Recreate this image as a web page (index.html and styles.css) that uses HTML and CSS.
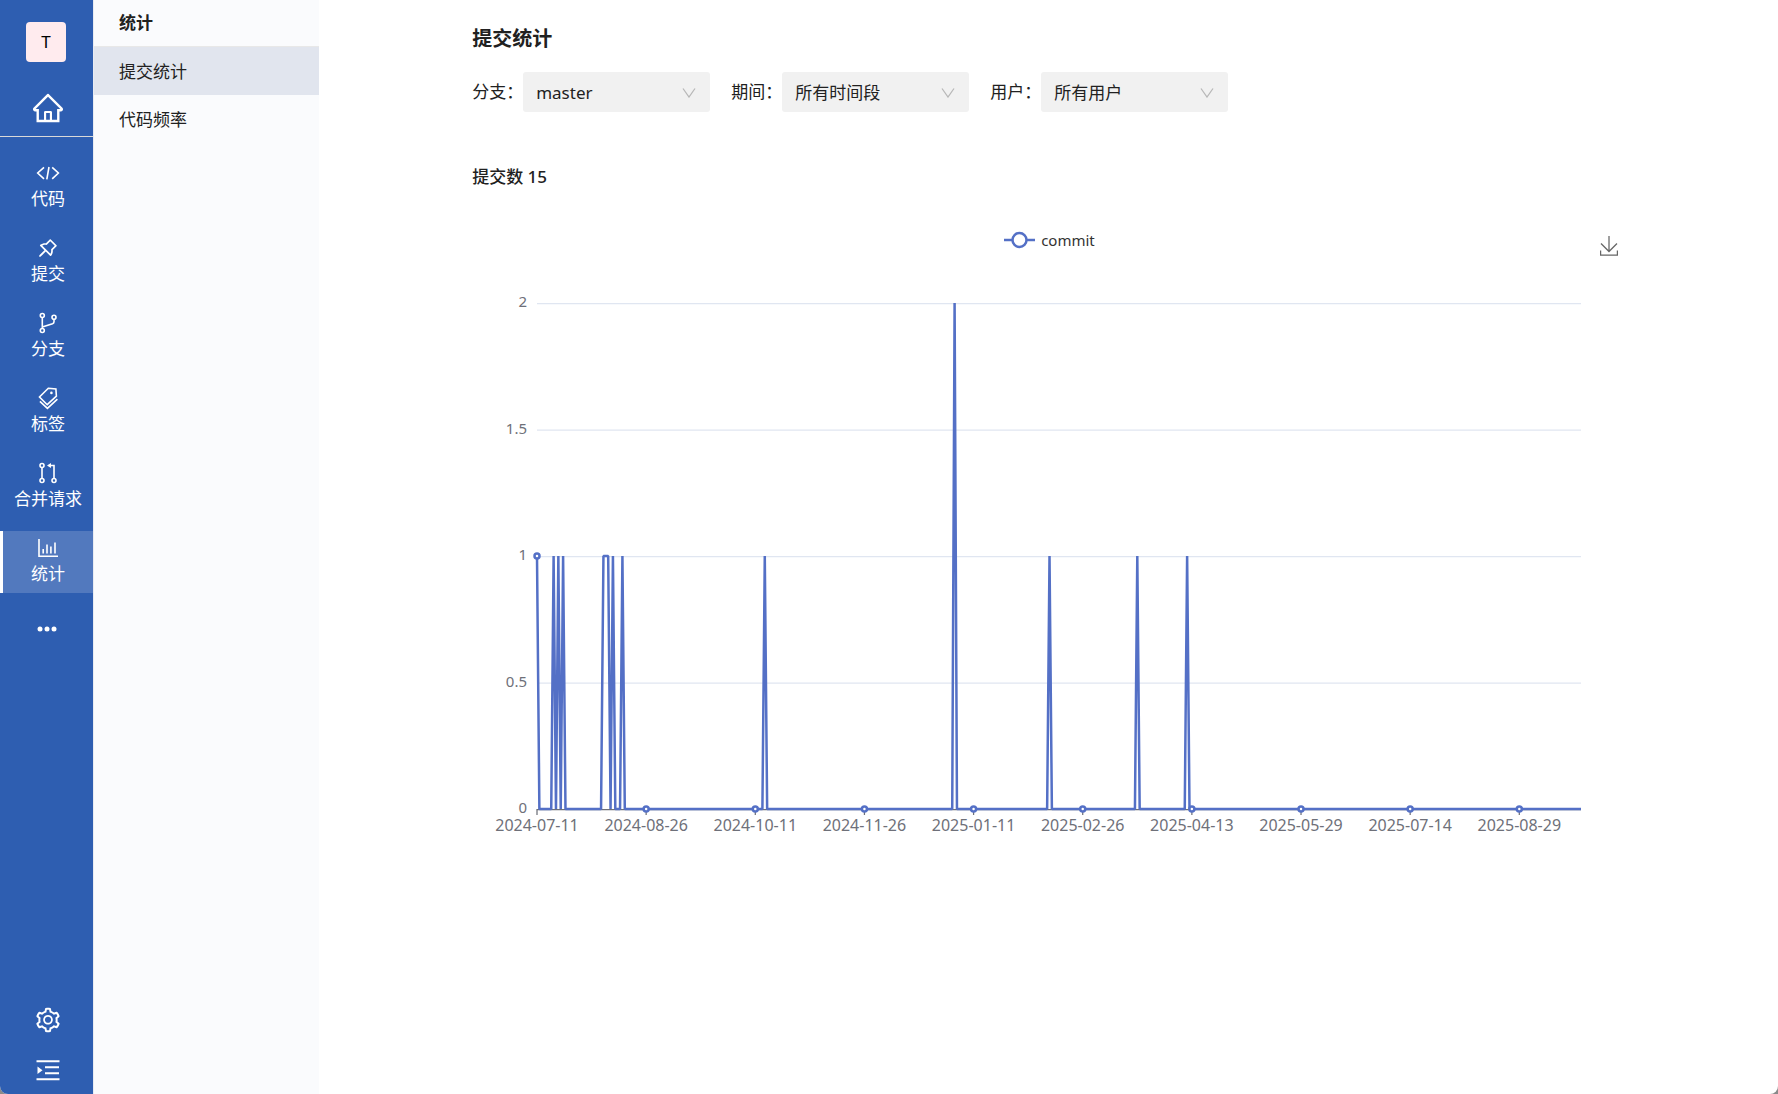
FILE: index.html
```html
<!DOCTYPE html>
<html lang="zh-CN">
<head>
  <meta charset="UTF-8" />
  <meta name="viewport" content="width=device-width, initial-scale=1.0" />
  <title>提交统计</title>
  <link rel="stylesheet" href="styles.css">
</head>
<body>

<div class="app">
  <aside class="sidebar">
    <a href="#" class="avatar">T</a>
    <a href="#" class="home" aria-label="首页">
      <svg viewBox="0 0 1024 1024" width="34" height="34" fill="currentColor"><path d="M946.5 505L560.1 118.8l-25.9-25.9a31.5 31.5 0 0 0-44.4 0L77.5 505a63.9 63.9 0 0 0-18.8 46c.4 35.2 29.7 63.3 64.9 63.3h42.5V940h691.8V614.3h43.4c17.1 0 33.2-6.7 45.3-18.8a63.6 63.6 0 0 0 18.7-45.3c0-17-6.7-33.1-18.8-45.2zM568 868H456V664h112v204zm217.9-325.7V868H632V640c0-22.1-17.9-40-40-40H432c-22.1 0-40 17.9-40 40v228H238.1V542.3h-96l370-369.7 23.1 23.1L882 542.3h-96.1z"/></svg>
    </a>

    <nav class="nav">
      <a href="#" class="nav-item">
        <svg class="icon" viewBox="0 0 24 24"><path d="M8 6.3 1.7 12 8 17.8M16.2 6.3l6.2 5.7-6.2 5.8M13 6l-2.2 12.3"/></svg>
        <span>代码</span>
      </a>
      <a href="#" class="nav-item">
        <svg class="icon icon-fill" viewBox="0 0 1024 1024"><path d="M878.3 392.1L631.9 145.7c-6.5-6.5-15-9.7-23.5-9.7s-17 3.2-23.5 9.7L423.8 306.9c-12.2-1.4-24.5-2-36.8-2-73.2 0-146.4 24.1-206.5 72.3-15.4 12.3-16.6 35.4-2.7 49.4l181.7 181.7-215.4 215.2a15.8 15.8 0 0 0-4.6 9.8l-3.4 37.2c-.9 9.4 6.6 17.4 15.9 17.4.5 0 1 0 1.5-.1l37.2-3.4c3.7-.3 7.2-2 9.8-4.6l215.4-215.4 181.7 181.7c6.5 6.5 15 9.7 23.5 9.7 9.7 0 19.3-4.2 25.9-12.4 56.3-70.3 79.7-158.3 70.2-243.4l161.1-161.1c12.9-12.8 12.9-33.8 0-46.8zM666.2 549.3l-24.5 24.5 3.8 34.4a259.92 259.92 0 0 1-30.4 153.9L262 408.8c12.9-7.1 26.3-13.1 40.3-17.9 27.2-9.4 55.7-14.1 84.7-14.1 9.6 0 19.3.5 28.9 1.6l34.4 3.8 24.5-24.5L608.5 224 800 415.5 666.2 549.3z"/></svg>
        <span>提交</span>
      </a>
      <a href="#" class="nav-item">
        <svg class="icon" viewBox="0 0 24 24"><circle cx="6.3" cy="4.5" r="2"/><circle cx="6.3" cy="19.5" r="2"/><circle cx="18" cy="6.3" r="2"/><path d="M6.3 6.5v11M18 8.3v2.5c0 1-.5 1.6-1.5 2L6.3 16"/></svg>
        <span>分支</span>
      </a>
      <a href="#" class="nav-item">
        <svg class="icon" viewBox="0 0 24 24"><path d="M12.3 2.3l7.6.6.5 7.3-9.2 8.5L3.5 11z"/><path d="M3.9 15.4l7.5 7 10-9.3"/><circle class="dot" cx="15.4" cy="6.9" r="1.3"/></svg>
        <span>标签</span>
      </a>
      <a href="#" class="nav-item">
        <svg class="icon" viewBox="0 0 24 24"><circle cx="6" cy="4.5" r="2"/><circle cx="6" cy="19.5" r="2"/><circle cx="18" cy="19.5" r="2"/><path d="M6 6.5v11M18 17.5v-13h-4.5"/><path class="dot" d="M11 4.5l4-2.6v5.2z"/></svg>
        <span>合并请求</span>
      </a>
      <a href="#" class="nav-item active" aria-current="page">
        <svg class="icon" viewBox="0 0 24 24"><path d="M3 3v17.2h19M7.2 17.4V13M11 17.4V8.5M14.9 17.4v-7M19 17.4V6.6"/></svg>
        <span>统计</span>
      </a>
    </nav>

    <button type="button" class="more" aria-label="更多">
      <svg viewBox="0 0 20 6" width="20" height="6" fill="currentColor"><circle cx="3" cy="3" r="2.5"/><circle cx="10" cy="3" r="2.5"/><circle cx="17" cy="3" r="2.5"/></svg>
    </button>

    <div class="sidebar-bottom">
      <button type="button" aria-label="设置">
        <svg viewBox="0 0 1024 1024" width="28" height="28" fill="currentColor"><path d="M924.8 625.7l-65.5-56c3.1-19 4.7-38.4 4.7-57.8s-1.6-38.8-4.7-57.8l65.5-56a32.03 32.03 0 0 0 9.3-35.2l-.9-2.6a443.74 443.74 0 0 0-79.7-137.9l-1.8-2.1a32.12 32.12 0 0 0-35.1-9.5l-81.3 28.9c-30-24.6-63.5-44-99.7-57.6l-15.7-85a32.05 32.05 0 0 0-25.8-25.7l-2.7-.5c-52.1-9.4-106.9-9.4-159 0l-2.7.5a32.05 32.05 0 0 0-25.8 25.7l-15.8 85.4a351.86 351.86 0 0 0-99 57.4l-81.9-29.1a32 32 0 0 0-35.1 9.5l-1.8 2.1a446.02 446.02 0 0 0-79.7 137.9l-.9 2.6c-4.5 12.5-.8 26.5 9.3 35.2l66.3 56.6c-3.1 18.8-4.6 38-4.6 57.1 0 19.2 1.5 38.4 4.6 57.1L99 625.5a32.03 32.03 0 0 0-9.3 35.2l.9 2.6c18.1 50.4 44.9 96.9 79.7 137.9l1.8 2.1a32.12 32.12 0 0 0 35.1 9.5l81.9-29.1c29.8 24.5 63.1 43.9 99 57.4l15.8 85.4a32.05 32.05 0 0 0 25.8 25.7l2.7.5a449.4 449.4 0 0 0 159 0l2.7-.5a32.05 32.05 0 0 0 25.8-25.7l15.7-85a350 350 0 0 0 99.7-57.6l81.3 28.9a32 32 0 0 0 35.1-9.5l1.8-2.1c34.8-41.1 61.6-87.5 79.7-137.9l.9-2.6c4.5-12.3.8-26.3-9.3-35zM788.3 465.9c2.5 15.1 3.8 30.6 3.8 46.1s-1.3 31-3.8 46.1l-6.6 40.1 74.7 63.9a370.03 370.03 0 0 1-42.6 73.6L721 702.8l-31.4 25.8c-23.9 19.6-50.5 35-79.3 45.8l-38.1 14.3-17.9 97a377.5 377.5 0 0 1-85 0l-17.9-97.2-37.8-14.5c-28.5-10.8-55-26.2-78.7-45.7l-31.4-25.9-93.4 33.2c-17-22.9-31.2-47.6-42.6-73.6l75.5-64.5-6.5-40c-2.4-14.9-3.7-30.3-3.7-45.5 0-15.3 1.2-30.6 3.7-45.5l6.5-40-75.5-64.5c11.3-26.1 25.6-50.7 42.6-73.6l93.4 33.2 31.4-25.9c23.7-19.5 50.2-34.9 78.7-45.7l37.9-14.3 17.9-97.2c28.1-3.2 56.8-3.2 85 0l17.9 97 38.1 14.3c28.7 10.8 55.4 26.2 79.3 45.8l31.4 25.8 92.8-32.9c17 22.9 31.2 47.6 42.6 73.6L781.8 426l6.5 39.9zM512 326c-97.2 0-176 78.8-176 176s78.8 176 176 176 176-78.8 176-176-78.8-176-176-176zm79.2 255.2A111.6 111.6 0 0 1 512 614c-29.9 0-58-11.7-79.2-32.8A111.6 111.6 0 0 1 400 502c0-29.9 11.7-58 32.8-79.2C454 401.6 482.1 390 512 390c29.9 0 58 11.6 79.2 32.8A111.6 111.6 0 0 1 624 502c0 29.9-11.7 58-32.8 79.2z"/></svg>
      </button>
      <button type="button" aria-label="展开菜单">
        <svg viewBox="0 0 24 24" width="24" height="24" fill="none" stroke="currentColor" stroke-width="2"><path d="M.5 3.3h23M9 9.3h14M9 15.3h14M.5 21.3h23"/><path d="M1.5 8.5v7.4l5-3.7z" fill="currentColor" stroke="none"/></svg>
      </button>
    </div>
  </aside>

  <aside class="submenu">
    <h2>统计</h2>
    <a href="#" class="submenu-item active">提交统计</a>
    <a href="#" class="submenu-item">代码频率</a>
  </aside>

  <main class="main">
    <div class="content">
      <h1>提交统计</h1>

      <form class="filters">
        <div class="filter">
          <label for="branch">分支：</label>
          <div class="select">
            <select id="branch">
              <option>master</option>
            </select>
            <svg viewBox="0 0 14 10" width="14" height="10"><path d="M1 .5l6 8.5 6-8.5"/></svg>
          </div>
        </div>
        <div class="filter">
          <label for="period">期间：</label>
          <div class="select">
            <select id="period">
              <option>所有时间段</option>
            </select>
            <svg viewBox="0 0 14 10" width="14" height="10"><path d="M1 .5l6 8.5 6-8.5"/></svg>
          </div>
        </div>
        <div class="filter">
          <label for="user">用户：</label>
          <div class="select">
            <select id="user">
              <option>所有用户</option>
            </select>
            <svg viewBox="0 0 14 10" width="14" height="10"><path d="M1 .5l6 8.5 6-8.5"/></svg>
          </div>
        </div>
      </form>

      <h3>提交数 15</h3>

      <div class="chart-head">
        <button type="button" class="legend">
          <svg viewBox="0 0 31 18" width="31" height="18"><path d="M0 9h31"/><circle cx="15.5" cy="9" r="7"/></svg>
          <span>commit</span>
        </button>
        <button type="button" class="download" aria-label="下载图表">
          <svg viewBox="0 0 18 20" width="18" height="20"><path d="M9 0v15.5M1 7.5l8 8 8-8M.6 14.5v4.6h16.8v-4.6"/></svg>
        </button>
      </div>
      <svg class="chart" id="chart" role="img" aria-label="commit"></svg>
    </div>
  </main>
</div>

<script src="chart.js"></script>
</body>
</html>
```

FILE: styles.css
```css
* {
  box-sizing: border-box;
}
body {
  margin: 0;
  background: #8a8a8a;
  color: #212121;
  font-family: "Noto Sans", "Noto Sans CJK SC", sans-serif;
  font-size: 17px;
  line-height: 24px;
}
a {
  color: inherit;
  text-decoration: none;
}
button {
  padding: 0;
  border: none;
  background: none;
  color: inherit;
  font: inherit;
  cursor: pointer;
}
svg {
  display: block;
}
.app {
  display: flex;
  min-height: 100vh;
  background: #fff;
  border-radius: 0 0 8px 8px;
  overflow: hidden;
}

/* left bar */
.sidebar {
  display: flex;
  flex-direction: column;
  flex: none;
  width: 93px;
  padding-top: 22px;
  background: #2e5eb1;
  color: #fff;
}
.avatar {
  width: 40px;
  height: 40px;
  margin-left: 26px;
  border-radius: 4px;
  background: #ffebee;
  color: #000;
  line-height: 40px;
  text-align: center;
}
.home {
  display: flex;
  justify-content: center;
  padding: 29px 0 11px 3px;
  border-bottom: 1px solid #d9d9d9;
}
.nav {
  display: flex;
  flex-direction: column;
  gap: 13px;
  padding-top: 19px;
}
.nav-item {
  display: flex;
  flex-direction: column;
  align-items: center;
  height: 62px;
  padding-top: 5px;
  border-left: 3px solid transparent;
  white-space: nowrap;
}
.nav-item span {
  margin-top: 2px;
}
.nav-item.active {
  background: #5279be;
  border-left-color: #fff;
}
.icon {
  width: 24px;
  height: 24px;
  fill: none;
  stroke: currentColor;
  stroke-width: 1.6;
}
.icon-fill {
  fill: currentColor;
  stroke: none;
}
.icon .dot {
  fill: currentColor;
  stroke: none;
}
.more {
  display: flex;
  justify-content: center;
  padding: 33px 0;
}
.sidebar-bottom {
  display: flex;
  flex-direction: column;
  align-items: center;
  gap: 24px;
  margin-top: auto;
  padding: 0 0 12px 2px;
}

/* second level menu */
.submenu {
  flex: none;
  width: 226px;
  border-left: 1px solid #e8ebf2;
  background: #fafbfd;
}
.submenu h2 {
  margin: 0;
  padding: 11px 25px;
  font-size: 17px;
  font-weight: 700;
}
.submenu-item {
  display: block;
  padding: 13px 25px 11px;
}
.submenu-item.active {
  background: #e1e5ee;
}
.submenu h2 + .submenu-item {
  border-top: 1px solid #e8e8e8;
}

/* page */
.main {
  flex: 1;
  min-width: 0;
}
.content {
  width: 79%;
  margin: 0 auto;
  padding: 24px 0;
}
h1 {
  margin: 0 0 18px;
  font-size: 20px;
  font-weight: 700;
  line-height: 30px;
}
.filters {
  display: flex;
  flex-wrap: wrap;
  gap: 21px;
}
.filter {
  display: flex;
  align-items: center;
}
.select {
  position: relative;
}
.select select {
  appearance: none;
  width: 187px;
  height: 40px;
  padding: 0 36px 0 13px;
  border: none;
  border-radius: 3px;
  background: #f1f1f1;
  color: #212121;
  font-family: inherit;
  font-size: 17px;
}
.select svg {
  position: absolute;
  top: 16px;
  right: 14px;
  fill: none;
  stroke: #b8b8b8;
  stroke-width: 1.3;
  pointer-events: none;
}
h3 {
  margin: 53px 0 0;
  font-size: 17px;
  font-weight: 500;
}
.chart-head {
  display: grid;
  grid-template-columns: 1fr auto 1fr;
  align-items: center;
  margin-top: 35px;
}
.legend {
  display: flex;
  grid-column: 2;
  align-items: center;
  gap: 6px;
  padding-left: 2px;
  color: #333;
  font-size: 15px;
}
.legend svg {
  fill: #fff;
  stroke: #5470c6;
  stroke-width: 2.5;
}
.download {
  justify-self: end;
  padding: 12px 7px 0 0;
}
.download svg {
  fill: none;
  stroke: #666;
  stroke-width: 1.25;
}
.chart {
  width: 100%;
  height: 600px;
}
.chart text {
  fill: #6e7079;
  font-size: 16px;
}
.chart .value {
  font-size: 15px;
}
.chart .grid {
  stroke: #e0e6f1;
  stroke-width: 1.25;
}
.chart .axis {
  stroke: #6e7079;
  stroke-width: 1.25;
}
.chart .line {
  fill: none;
  stroke: #5470c6;
  stroke-width: 2.5;
  stroke-linejoin: bevel;
}
.chart .point {
  fill: #fff;
  stroke: #5470c6;
  stroke-width: 2.5;
}
```

FILE: chart.js
```js
const DAYS = 441;
const LABEL_STEP = 46;
const MAX = 2;
const start = Date.UTC(2024, 6, 11);

// day offset -> number of commits, all other days are 0
const commits = {
  0: 1, 7: 1, 9: 1, 11: 1, 28: 1, 29: 1, 30: 1, 32: 1, 36: 1,
  96: 1, 176: 2, 216: 1, 253: 1, 274: 1
};

const chart = document.getElementById('chart');

function add(name, attrs, text) {
  const el = document.createElementNS('http://www.w3.org/2000/svg', name);
  for (const key in attrs) {
    el.setAttribute(key, attrs[key]);
  }
  if (text !== undefined) {
    el.textContent = text;
  }
  chart.appendChild(el);
}

function draw() {
  chart.innerHTML = '';
  const left = 65;
  const right = chart.clientWidth - 44;
  const top = 47;
  const bottom = top + 506;
  const x = day => left + (right - left) * day / (DAYS - 1);
  const y = value => bottom - (bottom - top) * value / MAX;

  for (let v = 0; v <= MAX; v += 0.5) {
    add('line', { class: v === 0 ? 'axis' : 'grid', x1: left, x2: right, y1: y(v) + 0.5, y2: y(v) + 0.5 });
    add('text', { class: 'value', x: left - 10, y: y(v) + 4, 'text-anchor': 'end' }, v);
  }

  const points = [];
  for (let day = 0; day < DAYS; day++) {
    points.push(x(day).toFixed(2) + ',' + y(commits[day] || 0));
  }

  for (let day = 0; day < DAYS - LABEL_STEP / 2; day += LABEL_STEP) {
    const date = new Date(start + day * 86400000).toISOString().slice(0, 10);
    add('line', { class: 'axis', x1: x(day), x2: x(day), y1: bottom, y2: bottom + 6 });
    add('text', { x: x(day), y: bottom + 22, 'text-anchor': 'middle' }, date);
  }

  add('polyline', { class: 'line', points: points.join(' ') });

  for (let day = 0; day < DAYS - LABEL_STEP / 2; day += LABEL_STEP) {
    add('circle', { class: 'point', cx: x(day), cy: y(commits[day] || 0), r: 2.5 });
  }
}

draw();
window.addEventListener('resize', draw);
```
